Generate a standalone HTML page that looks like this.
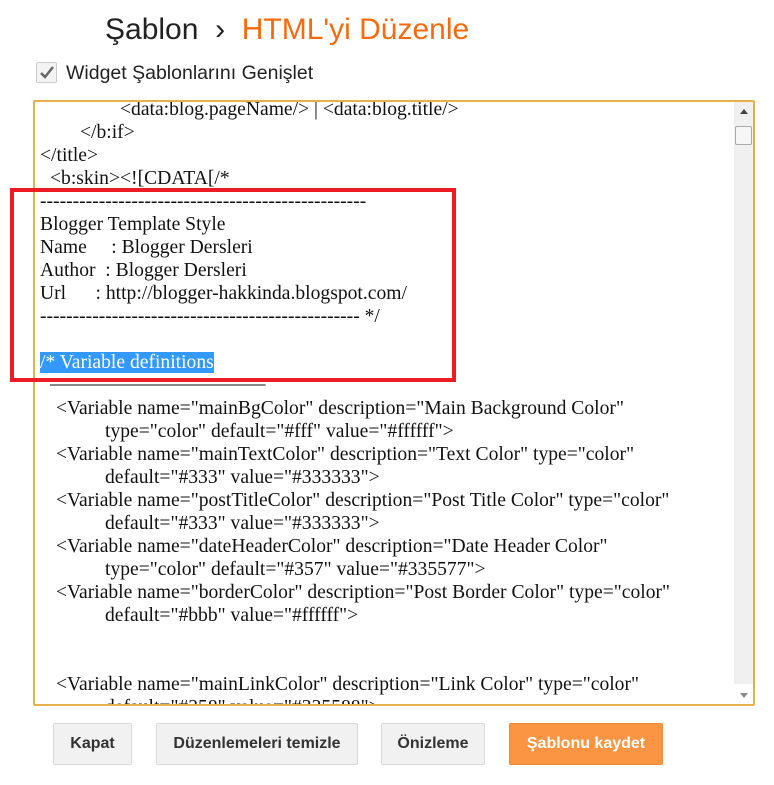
<!DOCTYPE html>
<html><head><meta charset="utf-8"><style>
body{margin:0;width:774px;height:785px;background:#fff;position:relative;overflow:hidden;font-family:"Liberation Sans",sans-serif}
.t{position:absolute;top:13px;left:105px;font-size:30px;color:#222;white-space:nowrap}
.t .o{color:#f86a0d}
.cb{position:absolute;left:36px;top:62px;width:19px;height:19px;border:1px solid #ccc;border-radius:2px;background:#f3f3f3}
.cbl{position:absolute;left:66px;top:62px;font-size:19.5px;color:#222}
.ta{position:absolute;left:33px;top:100px;width:718px;height:602px;border:2px solid #e8b04c;border-radius:2px;overflow:hidden;background:#fff}
.sb{position:absolute;right:0;top:0;width:19px;height:582px;background:#f0f0f0}
.code{position:absolute;font-family:"Liberation Serif",serif;font-size:19.6px;color:#111;white-space:pre;line-height:23px}
.l{position:absolute;left:0;white-space:pre}
.sel{background:#3399ff;color:#fff}
.red{position:absolute;left:10px;top:188px;width:438px;height:186px;border:4px solid #ed1c24}
.btn{position:absolute;top:723px;height:40px;border:1px solid #d9d9d9;border-radius:2px;background:#f1f1f1;font-weight:bold;font-size:16px;color:#333;text-align:center;line-height:40px}
</style></head><body>
<div class="t">Şablon &nbsp;›&nbsp; <span class="o">HTML'yi Düzenle</span></div>
<div class="cb"><svg width="19" height="19"><path d="M4 10 L8 14 L16 4" stroke="#666" stroke-width="2.5" fill="none"/></svg></div>
<div class="cbl">Widget Şablonlarını Genişlet</div>
<div class="ta">
<div class="sb"><div style="position:absolute;left:6px;top:7px;border:4px solid transparent;border-bottom:5px solid #444;border-top:0"></div>
<div style="position:absolute;left:1px;top:24px;width:15px;height:17px;border:1px solid #aaa;background:#f6f6f6;border-radius:2px"></div>
<div style="position:absolute;left:6px;bottom:-14px;border:4px solid transparent;border-top:5px solid #888;border-bottom:0"></div></div>
<div class="code" style="left:0;top:-4px">
<div class="l" style="top:0;left:85px">&lt;data:blog.pageName/&gt; | &lt;data:blog.title/&gt;</div>
<div class="l" style="top:23px;left:45px">&lt;/b:if&gt;</div>
<div class="l" style="top:46px;left:5px">&lt;/title&gt;</div>
<div class="l" style="top:69px;left:15px">&lt;b:skin&gt;&lt;![CDATA[/*</div>
<div class="l" style="top:92px;left:5px">--------------------------------------------------</div>
<div class="l" style="top:115px;left:5px">Blogger Template Style</div>
<div class="l" style="top:138px;left:5px">Name     : Blogger Dersleri</div>
<div class="l" style="top:161px;left:5px">Author  : Blogger Dersleri</div>
<div class="l" style="top:184px;left:5px">Url      : http://blogger-hakkinda.blogspot.com/</div>
<div class="l" style="top:207px;left:5px">------------------------------------------------- */</div>
<div class="l" style="top:253px;left:5px"><span class="sel">/* Variable definitions</span></div>
<div class="l" style="top:268px;left:15px">______________________</div>
<div class="l" style="top:299px;left:21px">&lt;Variable name="mainBgColor" description="Main Background Color"</div>
<div class="l" style="top:322px;left:70px">type="color" default="#fff" value="#ffffff"&gt;</div>
<div class="l" style="top:345px;left:21px">&lt;Variable name="mainTextColor" description="Text Color" type="color"</div>
<div class="l" style="top:368px;left:70px">default="#333" value="#333333"&gt;</div>
<div class="l" style="top:391px;left:21px">&lt;Variable name="postTitleColor" description="Post Title Color" type="color"</div>
<div class="l" style="top:414px;left:70px">default="#333" value="#333333"&gt;</div>
<div class="l" style="top:437px;left:21px">&lt;Variable name="dateHeaderColor" description="Date Header Color"</div>
<div class="l" style="top:460px;left:70px">type="color" default="#357" value="#335577"&gt;</div>
<div class="l" style="top:483px;left:21px">&lt;Variable name="borderColor" description="Post Border Color" type="color"</div>
<div class="l" style="top:506px;left:70px">default="#bbb" value="#ffffff"&gt;</div>
<div class="l" style="top:575px;left:21px">&lt;Variable name="mainLinkColor" description="Link Color" type="color"</div>
<div class="l" style="top:598px;left:70px">default="#358" value="#335588"&gt;</div>
</div>
</div>
<div class="red"></div>
<div class="btn" style="left:53px;width:77px">Kapat</div>
<div class="btn" style="left:156px;width:200px">Düzenlemeleri temizle</div>
<div class="btn" style="left:381px;width:102px">Önizleme</div>
<div class="btn" style="left:509px;width:152px;background:#fb9543;border-color:#f08a3a;color:#fff">Şablonu kaydet</div>
</body></html>
